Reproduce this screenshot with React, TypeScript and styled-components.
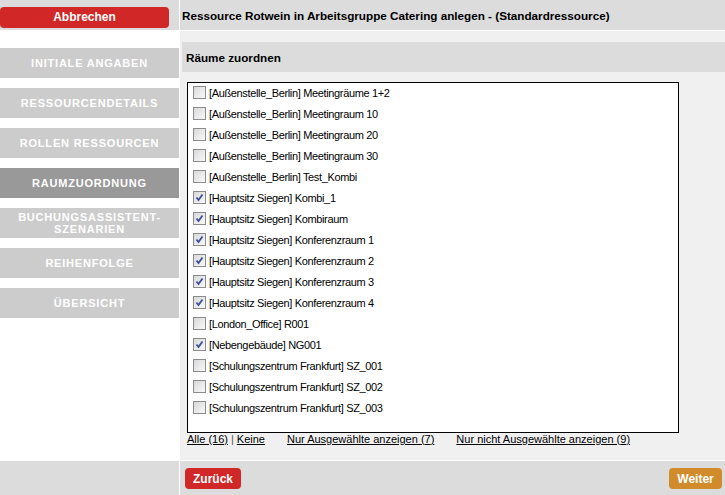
import * as React from "react";
import styled, { createGlobalStyle } from "styled-components";

const GlobalStyle = createGlobalStyle`
  html, body { margin: 0; padding: 0; background: #fff; }
  body { font-family: "Liberation Sans", Arial, sans-serif; font-size: 11px; color: #000; }
`;

const Page = styled.div`
  width: 725px;
  height: 495px;
  display: grid;
  grid-template-columns: 179px 545px;
  grid-template-rows: 30px 429px 35px;
  column-gap: 1px;
  row-gap: 1px;
  background: #fff;
  overflow: hidden;
`;

const TopLeft = styled.div`
  background: #dcdcdc;
  display: flex;
  align-items: center;
  padding-top: 4px;
  box-sizing: border-box;
`;

const Button = styled.button<{ $tone: "red" | "orange"; $width: number }>`
  width: ${(p) => p.$width}px;
  height: 21px;
  border: none;
  border-radius: 4px;
  background: ${(p) => (p.$tone === "red" ? "#d12727" : "#d18b2a")};
  color: #fff;
  font-family: "Liberation Sans", Arial, sans-serif;
  font-weight: bold;
  font-size: 12px;
  padding: 0;
  cursor: pointer;
`;

const TopRight = styled.div`
  background: #dcdcdc;
  display: flex;
  align-items: center;
  padding-left: 2px;
  font-weight: bold;
  font-size: 11.7px;
`;

const Nav = styled.nav`
  background: #fff;
  display: flex;
  flex-direction: column;
  gap: 10px;
  padding-top: 17px;
`;

const NavItem = styled.div<{ $active?: boolean }>`
  height: 30px;
  background: ${(p) => (p.$active ? "#999999" : "#cccccc")};
  color: #fff;
  font-weight: bold;
  font-size: 11px;
  letter-spacing: 0.8px;
  line-height: 12px;
  display: flex;
  align-items: center;
  justify-content: center;
  text-align: center;
`;

const Main = styled.main`
  background: #f0f0f0;
  padding: 11px 0 0 2px;
  display: flex;
  flex-direction: column;
`;

const SectionHead = styled.div`
  height: 30px;
  background: #dcdcdc;
  display: flex;
  align-items: center;
  padding-left: 4px;
  font-weight: bold;
  font-size: 11.7px;
`;

const ListBox = styled.div`
  margin: 10px 0 0 5px;
  width: 485px;
  height: 348px;
  border: 1px solid #000;
  background: #fff;
  padding: 1px 0 0 5px;
  box-sizing: content-box;
`;

const Row = styled.label`
  height: 21px;
  box-sizing: border-box;
  padding-bottom: 4px;
  display: flex;
  align-items: center;
  gap: 3px;
  font-size: 11px;
  letter-spacing: -0.35px;
  cursor: pointer;
`;

const Box = styled.span`
  width: 13px;
  height: 13px;
  box-sizing: border-box;
  border: 1px solid #8c8c8c;
  background: linear-gradient(135deg, #d8d8d8 0%, #ececec 60%, #f8f8f8 100%);
  display: flex;
  align-items: center;
  justify-content: center;
`;

const Links = styled.div`
  margin-left: 5px;
  display: flex;
  gap: 22px;
  font-size: 11px;
  line-height: 13px;
`;

const LinkGroup = styled.span`
  color: #000;
`;

const Link = styled.a`
  color: #000;
  text-decoration: underline;
  cursor: pointer;
`;

const Sep = styled.span`
  color: #555;
  margin: 0 3px;
`;

const BottomLeft = styled.div`
  background: #dcdcdc;
`;

const BottomRight = styled.div`
  background: #dcdcdc;
  display: flex;
  align-items: center;
  justify-content: space-between;
  padding: 0 3px 0 5px;
`;

const rooms: [string, boolean][] = [
  ["[Außenstelle_Berlin] Meetingräume 1+2", false],
  ["[Außenstelle_Berlin] Meetingraum 10", false],
  ["[Außenstelle_Berlin] Meetingraum 20", false],
  ["[Außenstelle_Berlin] Meetingraum 30", false],
  ["[Außenstelle_Berlin] Test_Kombi", false],
  ["[Hauptsitz Siegen] Kombi_1", true],
  ["[Hauptsitz Siegen] Kombiraum", true],
  ["[Hauptsitz Siegen] Konferenzraum 1", true],
  ["[Hauptsitz Siegen] Konferenzraum 2", true],
  ["[Hauptsitz Siegen] Konferenzraum 3", true],
  ["[Hauptsitz Siegen] Konferenzraum 4", true],
  ["[London_Office] R001", false],
  ["[Nebengebäude] NG001", true],
  ["[Schulungszentrum Frankfurt] SZ_001", false],
  ["[Schulungszentrum Frankfurt] SZ_002", false],
  ["[Schulungszentrum Frankfurt] SZ_003", false],
];

const steps = [
  "INITIALE ANGABEN",
  "RESSOURCENDETAILS",
  "ROLLEN RESSOURCEN",
  "RAUMZUORDNUNG",
  "BUCHUNGSASSISTENT-\nSZENARIEN",
  "REIHENFOLGE",
  "ÜBERSICHT",
];

const Check = () => (
  <svg width="9" height="9" viewBox="0 0 9 9">
    <path d="M1.5 4.5 L3.5 7 L7.5 1.5" fill="none" stroke="#3d4f9a" strokeWidth="1.8" />
  </svg>
);

export default function App() {
  const [checked, setChecked] = React.useState(rooms.map((r) => r[1]));
  const count = checked.filter(Boolean).length;
  return (
    <>
      <GlobalStyle />
      <Page>
        <TopLeft>
          <Button $tone="red" $width={169}>Abbrechen</Button>
        </TopLeft>
        <TopRight>Ressource Rotwein in Arbeitsgruppe Catering anlegen - (Standardressource)</TopRight>
        <Nav>
          {steps.map((s) => (
            <NavItem key={s} $active={s === "RAUMZUORDNUNG"}>
              <span>
                {s.split("\n").map((l, i) => (
                  <React.Fragment key={l}>
                    {i > 0 && <br />}
                    {l}
                  </React.Fragment>
                ))}
              </span>
            </NavItem>
          ))}
        </Nav>
        <Main>
          <SectionHead>Räume zuordnen</SectionHead>
          <ListBox>
            {rooms.map(([name], i) => (
              <Row
                key={name}
                onClick={() => setChecked((c) => c.map((v, j) => (j === i ? !v : v)))}
              >
                <Box>{checked[i] && <Check />}</Box>
                <span>{name}</span>
              </Row>
            ))}
          </ListBox>
          <Links>
            <LinkGroup>
              <Link>Alle (16)</Link>
              <Sep>|</Sep>
              <Link>Keine</Link>
            </LinkGroup>
            <Link>Nur Ausgewählte anzeigen ({count})</Link>
            <Link>Nur nicht Ausgewählte anzeigen ({16 - count})</Link>
          </Links>
        </Main>
        <BottomLeft />
        <BottomRight>
          <Button $tone="red" $width={56}>Zurück</Button>
          <Button $tone="orange" $width={53}>Weiter</Button>
        </BottomRight>
      </Page>
    </>
  );
}
